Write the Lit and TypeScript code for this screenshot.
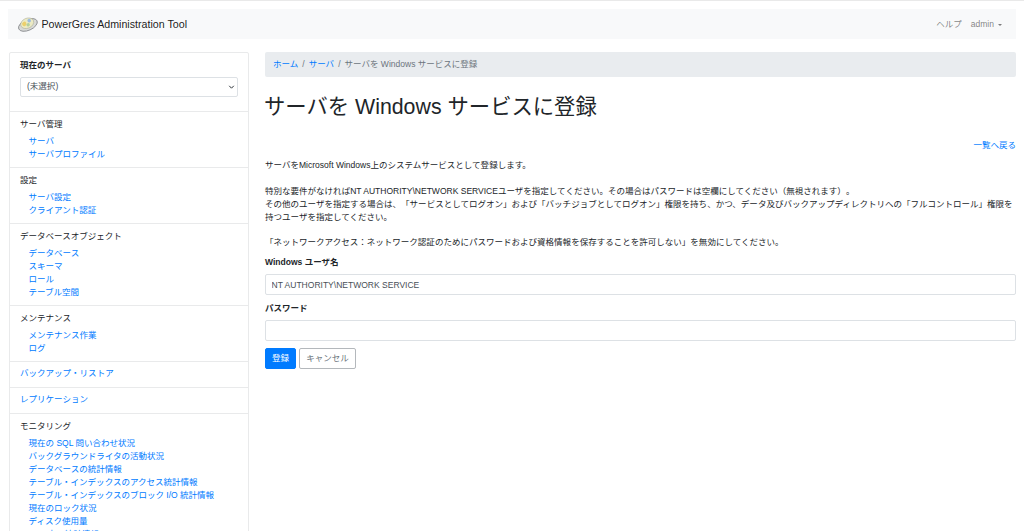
import { LitElement, html, css } from "lit";
import { customElement } from "lit/decorators.js";

const sections: { title: string; links: string[] }[] = [
  { title: "サーバ管理", links: ["サーバ", "サーバプロファイル"] },
  { title: "設定", links: ["サーバ設定", "クライアント認証"] },
  { title: "データベースオブジェクト", links: ["データベース", "スキーマ", "ロール", "テーブル空間"] },
  { title: "メンテナンス", links: ["メンテナンス作業", "ログ"] },
];
const monitoring = [
  "現在の SQL 問い合わせ状況",
  "バックグラウンドライタの活動状況",
  "データベースの統計情報",
  "テーブル・インデックスのアクセス統計情報",
  "テーブル・インデックスのブロック I/O 統計情報",
  "現在のロック状況",
  "ディスク使用量",
  "SQL 文の統計情報",
];

@customElement("app-root")
export class AppRoot extends LitElement {
  static styles = css`
    :host {
      display: block;
      height: 531px;
      overflow: hidden;
      background: #fff;
      color: #212529;
      font-family: "Liberation Sans", "Noto Sans CJK JP", sans-serif;
      font-size: 8.533px;
      line-height: 13px;
      text-spacing-trim: space-all;
      border-top: 1px solid #e9e9e9;
      box-sizing: border-box;
    }
    a { color: #007bff; text-decoration: none; }
    .navbar {
      margin: 8px 8px 0;
      height: 30px;
      background: #f8f9fa;
      display: flex;
      align-items: center;
      padding: 0 9px;
    }
    .brand {
      display: flex;
      align-items: center;
      gap: 3.5px;
      font-size: 10.667px;
      color: rgba(0, 0, 0, 0.9);
    }
    .logo { width: 21px; height: 18px; display: block; }
    .nav-right {
      margin-left: auto;
      display: flex;
      align-items: center;
      gap: 9px;
      color: rgba(0, 0, 0, 0.5);
      padding-right: 5px;
    }
    .caret {
      display: inline-block;
      margin-left: 4px;
      vertical-align: 1px;
      border-top: 2.5px solid rgba(0, 0, 0, 0.5);
      border-left: 2.5px solid transparent;
      border-right: 2.5px solid transparent;
    }
    .layout {
      display: grid;
      grid-template-columns: 240px 1fr;
      column-gap: 15px;
      margin: 13px 8px 0 9px;
      align-items: start;
    }
    .sidebar {
      border: 1px solid #e9eaeb;
      border-radius: 2px;
      background: #fff;
    }
    .server-box { padding: 6px 10px 14px; }
    .server-box b { display: block; font-weight: 700; margin-bottom: 5px; }
    select {
      display: block;
      width: 100%;
      height: 20px;
      box-sizing: border-box;
      border: 1px solid #dde1e5;
      border-radius: 2px;
      background: #fff;
      appearance: none;
      padding: 0 14px 2px 6px;
      font: inherit;
      color: #495057;
    }
    .select-wrap { position: relative; }
    .chevron {
      position: absolute;
      right: 3px;
      top: 7px;
      width: 7px;
      height: 6px;
      pointer-events: none;
    }
    .section {
      border-top: 1px solid #e9eaeb;
      padding: 6px 10px;
    }
    .section.single { padding: 5px 10px 7px; }
    .section .title { margin-bottom: 4px; }
    .section ul {
      list-style: none;
      margin: 0;
      padding: 0 0 0 8.5px;
    }
    .section li { height: 13px; white-space: nowrap; }
    main { min-width: 0; }
    .crumbs {
      height: 25px;
      margin-left: 1px;
      background: #e9ecef;
      border-radius: 2px;
      display: flex;
      align-items: center;
      padding: 0 8px;
      color: #6c757d;
      gap: 4px;
    }
    h1 {
      margin: 18px 0 0 0;
      font-size: 21.33px;
      line-height: 25px;
      font-weight: 400;
    }
    .back {
      text-align: right;
      margin-top: 19px;
      height: 13px;
    }
    .form-area { margin-left: 1px; }
    p { margin: 7px 0 0; }
    p.gap { margin-top: 13px; }
    p.gap.tight { margin-top: 12px; }
    label { display: block; font-weight: 700; margin-top: 7px; }
    input {
      display: block;
      width: 100%;
      height: 21px;
      margin-top: 5px;
      box-sizing: border-box;
      border: 1px solid #dde1e5;
      border-radius: 2px;
      padding: 0 5.5px;
      font: inherit;
      color: #495057;
      background: #fff;
    }
    .buttons { display: flex; gap: 3px; margin-top: 7px; }
    button {
      height: 21px;
      box-sizing: border-box;
      border-radius: 2px;
      padding: 0;
      font: inherit;
      white-space: nowrap;
    }
    .primary { background: #007bff; border: 1px solid #007bff; color: #fff; width: 31px; }
    .secondary { background: #fff; border: 1px solid #b4b8bc; color: #6c757d; width: 57px; }
  `;

  private group(title: string, links: string[]) {
    return html`<div class="section">
      <div class="title">${title}</div>
      <ul>${links.map((l) => html`<li><a href="#">${l}</a></li>`)}</ul>
    </div>`;
  }

  render() {
    return html`
      <nav class="navbar">
        <div class="brand">
          <svg class="logo" viewBox="0 0 21 18">
            <g transform="rotate(-24 10.5 9)">
              <ellipse cx="10.5" cy="10" rx="10" ry="5.4" fill="#d8dad8" stroke="#85878a" stroke-width="0.8"/>
              <ellipse cx="10.5" cy="8.2" rx="6.8" ry="5" fill="#ecebc4" stroke="#a8a890" stroke-width="0.5"/>
              <circle cx="7.6" cy="7.6" r="2.2" fill="#ecd06c"/>
              <circle cx="13.4" cy="6.6" r="1.8" fill="#9dbde0"/>
              <circle cx="10.8" cy="10" r="1.7" fill="#b4d09c"/>
            </g>
          </svg>
          <span>PowerGres Administration Tool</span>
        </div>
        <div class="nav-right">
          <span>ヘルプ</span>
          <span>admin<i class="caret"></i></span>
        </div>
      </nav>
      <div class="layout">
        <aside class="sidebar">
          <div class="server-box">
            <b>現在のサーバ</b>
            <div class="select-wrap">
              <select><option>(未選択)</option></select>
              <svg class="chevron" viewBox="0 0 7 6">
                <path d="M1.2 1.8 3.5 4.2 5.8 1.8" fill="none" stroke="#343a40" stroke-width="1"/>
              </svg>
            </div>
          </div>
          ${sections.map((s) => this.group(s.title, s.links))}
          <div class="section single"><a href="#">バックアップ・リストア</a></div>
          <div class="section single"><a href="#">レプリケーション</a></div>
          ${this.group("モニタリング", monitoring)}
        </aside>
        <main>
          <div class="crumbs">
            <a href="#">ホーム</a><span>/</span><a href="#">サーバ</a><span>/</span><span>サーバを Windows サービスに登録</span>
          </div>
          <h1>サーバを Windows サービスに登録</h1>
          <div class="back"><a href="#">一覧へ戻る</a></div>
          <div class="form-area">
            <p>サーバをMicrosoft Windows上のシステムサービスとして登録します。</p>
            <p class="gap">特別な要件がなければNT AUTHORITY\\NETWORK SERVICEユーザを指定してください。その場合はパスワードは空欄にしてください（無視されます）。<br />その他のユーザを指定する場合は、「サービスとしてログオン」および「バッチジョブとしてログオン」権限を持ち、かつ、データ及びバックアップディレクトリへの「フルコントロール」権限を持つユーザを指定してください。</p>
            <p class="gap tight">「ネットワークアクセス：ネットワーク認証のためにパスワードおよび資格情報を保存することを許可しない」を無効にしてください。</p>
            <label>Windows ユーザ名</label>
            <input type="text" .value=${"NT AUTHORITY\\NETWORK SERVICE"} />
            <label>パスワード</label>
            <input type="password" />
            <div class="buttons">
              <button class="primary">登録</button>
              <button class="secondary">キャンセル</button>
            </div>
          </div>
        </main>
      </div>
    `;
  }
}
